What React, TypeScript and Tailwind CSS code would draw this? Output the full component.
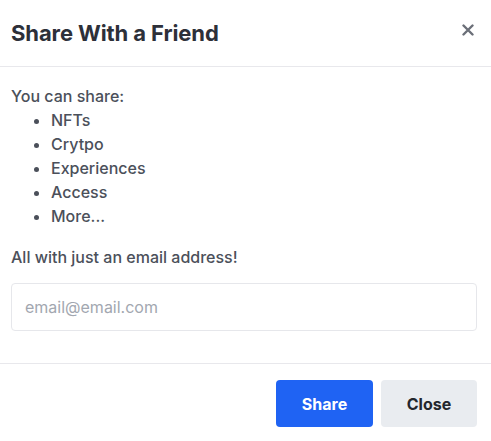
import React from "react";

export default function App() {
  const items = ["NFTs", "Crytpo", "Experiences", "Access", "More..."];
  return (
    <div className="w-[491px] h-[441px] bg-white flex flex-col" style={{ fontFamily: "Inter, 'Noto Sans', sans-serif" }}>
      <div className="h-[67px] flex items-center justify-between pl-[11px] pr-[15px] border-b border-[#e8e8ec]">
        <h2 className="text-[22px] font-bold text-[#2d3039] tracking-[-0.1px]">Share With a Friend</h2>
        <button className="w-[16px] h-[16px] flex items-center justify-center text-[#6b6f78] -mt-[6px]">
          <svg width="12" height="12" viewBox="0 0 12 12">
            <path d="M1.5 1.5 L10.5 10.5 M10.5 1.5 L1.5 10.5" stroke="currentColor" strokeWidth="2.4" strokeLinecap="round" />
          </svg>
        </button>
      </div>
      <div className="flex flex-col px-[11px] pt-[17px] text-[16px] leading-[24px] font-medium text-[#4b505a]">
        <p>You can share:</p>
        <ul className="list-disc pl-[40px]">
          {items.map((i) => (
            <li key={i}>{i}</li>
          ))}
        </ul>
        <p className="mt-[17px]">All with just an email address!</p>
        <input
          className="mt-[14px] h-[48px] w-[466px] border border-[#e6e7eb] rounded-[4px] px-[13px] text-[16px] font-normal placeholder-[#a2a7b0] outline-none"
          placeholder="email@email.com"
        />
      </div>
      <div className="mt-[32px] border-t border-[#e8e8ec] flex justify-end gap-[8px] pr-[14px] pt-[16px]">
        <button className="w-[97px] h-[47px] rounded-[4px] bg-[#1f63f3] text-white font-bold text-[16px]">Share</button>
        <button className="w-[96px] h-[47px] rounded-[4px] bg-[#e9ecf0] text-[#23262d] font-bold text-[16px]">Close</button>
      </div>
    </div>
  );
}
